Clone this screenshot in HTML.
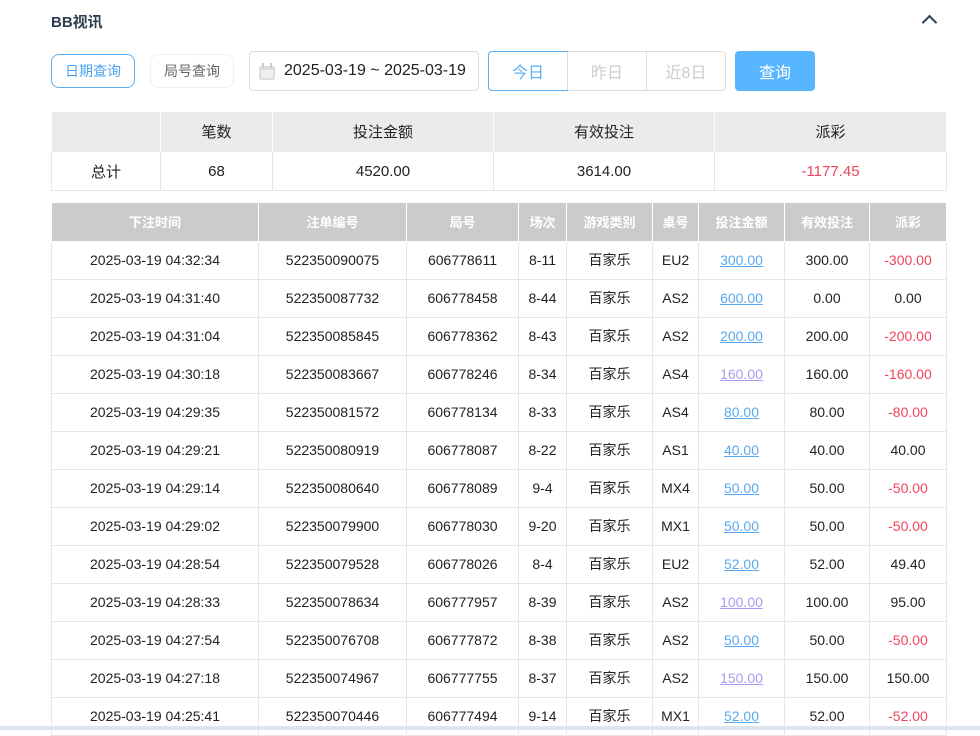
<!DOCTYPE html><html><head><meta charset="utf-8"><style>
*{margin:0;padding:0;box-sizing:border-box}
body{width:980px;height:730px;overflow:hidden;background:#fff;font-family:"Liberation Sans","Noto Sans CJK SC",sans-serif;color:#222;position:relative}
.t{position:absolute;left:51px;top:11px;font-size:15px;font-weight:bold;color:#2c3e50}
.car{position:absolute;left:924px;width:11px;height:11px;border-left:2.5px solid #2c3e50;border-top:2.5px solid #2c3e50;transform:rotate(45deg);top:17px}
.b{position:absolute;top:54px;height:34px;border-radius:8px;font-size:14px;display:flex;align-items:center;justify-content:center}
.date{position:absolute;left:249px;top:51px;width:230px;height:40px;border:1px solid #ddd;border-radius:4px;font-size:16px;display:flex;align-items:center;padding-left:34px}
.grp{position:absolute;left:488px;top:51px;width:238px;height:40px;border:1px solid #ddd;border-radius:4px;display:flex;font-size:16px;color:#ccc}
.grp div{flex:1;display:flex;align-items:center;justify-content:center;border-left:1px solid #ddd}
table{position:absolute;border-collapse:collapse;font-size:15px;text-align:center}
td,th{border:1px solid #e6e6e6}
.s{left:51px;top:111px;width:896px}
.s th{background:#ebebeb;font-weight:normal;height:40px;border-color:#fff #fff #ebebeb}
.s td{height:39px}
.m{left:51px;top:203px;width:896px;font-size:14px}
.m th{background:#cbcbcb;color:#fff;height:38px;border:1px solid #fff;border-top:0;font-weight:bold;font-size:13px}
.m td{height:38px}
.r{color:#f0445a}a{color:#5aa9f0;text-decoration:underline}.v{color:#a89ef0}
</style></head><body>
<div class="t">BB视讯</div><div class="car"></div>
<div class="b" style="left:51px;width:84px;border:1px solid #5ab0f5;color:#4aa3f0">日期查询</div>
<div class="b" style="left:150px;width:84px;border:1px solid #eee;color:#666">局号查询</div>
<div class="date"><svg style="position:absolute;left:9px;top:11px" width="16" height="17"><rect x="0" y="3" width="16" height="14" rx="2" fill="#ddd"/><rect x="3" y="0" width="2" height="5" fill="#ccc"/><rect x="11" y="0" width="2" height="5" fill="#ccc"/><rect x="2" y="7" width="12" height="8" fill="#eee"/></svg>2025-03-19 ~ 2025-03-19</div>
<div class="grp"><div style="border:1px solid #5ab0f5;color:#5ab0f5;margin:-1px;border-radius:4px 0 0 4px">今日</div><div>昨日</div><div>近8日</div></div>
<div class="b" style="left:735px;top:51px;height:40px;width:80px;border-radius:4px;background:#57b6fd;color:#fff;font-size:16px">查询</div>
<table class="s"><tr><th style="width:109px"></th><th style="width:112px">笔数</th><th style="width:221px">投注金额</th><th style="width:221px">有效投注</th><th>派彩</th></tr>
<tr><td>总计</td><td>68</td><td>4520.00</td><td>3614.00</td><td class="r">-1177.45</td></tr></table>
<table class="m"><tr><th style="width:207px">下注时间</th><th style="width:148px">注单编号</th><th style="width:112px">局号</th><th style="width:48px">场次</th><th style="width:86px">游戏类别</th><th style="width:46px">桌号</th><th style="width:86px">投注金额</th><th style="width:85px">有效投注</th><th>派彩</th></tr>
<tr><td>2025-03-19 04:32:34</td><td>522350090075</td><td>606778611</td><td>8-11</td><td>百家乐</td><td>EU2</td><td><a>300.00</a></td><td>300.00</td><td class="r">-300.00</td></tr>
<tr><td>2025-03-19 04:31:40</td><td>522350087732</td><td>606778458</td><td>8-44</td><td>百家乐</td><td>AS2</td><td><a>600.00</a></td><td>0.00</td><td>0.00</td></tr>
<tr><td>2025-03-19 04:31:04</td><td>522350085845</td><td>606778362</td><td>8-43</td><td>百家乐</td><td>AS2</td><td><a>200.00</a></td><td>200.00</td><td class="r">-200.00</td></tr>
<tr><td>2025-03-19 04:30:18</td><td>522350083667</td><td>606778246</td><td>8-34</td><td>百家乐</td><td>AS4</td><td><a class="v">160.00</a></td><td>160.00</td><td class="r">-160.00</td></tr>
<tr><td>2025-03-19 04:29:35</td><td>522350081572</td><td>606778134</td><td>8-33</td><td>百家乐</td><td>AS4</td><td><a>80.00</a></td><td>80.00</td><td class="r">-80.00</td></tr>
<tr><td>2025-03-19 04:29:21</td><td>522350080919</td><td>606778087</td><td>8-22</td><td>百家乐</td><td>AS1</td><td><a>40.00</a></td><td>40.00</td><td>40.00</td></tr>
<tr><td>2025-03-19 04:29:14</td><td>522350080640</td><td>606778089</td><td>9-4</td><td>百家乐</td><td>MX4</td><td><a>50.00</a></td><td>50.00</td><td class="r">-50.00</td></tr>
<tr><td>2025-03-19 04:29:02</td><td>522350079900</td><td>606778030</td><td>9-20</td><td>百家乐</td><td>MX1</td><td><a>50.00</a></td><td>50.00</td><td class="r">-50.00</td></tr>
<tr><td>2025-03-19 04:28:54</td><td>522350079528</td><td>606778026</td><td>8-4</td><td>百家乐</td><td>EU2</td><td><a>52.00</a></td><td>52.00</td><td>49.40</td></tr>
<tr><td>2025-03-19 04:28:33</td><td>522350078634</td><td>606777957</td><td>8-39</td><td>百家乐</td><td>AS2</td><td><a class="v">100.00</a></td><td>100.00</td><td>95.00</td></tr>
<tr><td>2025-03-19 04:27:54</td><td>522350076708</td><td>606777872</td><td>8-38</td><td>百家乐</td><td>AS2</td><td><a>50.00</a></td><td>50.00</td><td class="r">-50.00</td></tr>
<tr><td>2025-03-19 04:27:18</td><td>522350074967</td><td>606777755</td><td>8-37</td><td>百家乐</td><td>AS2</td><td><a class="v">150.00</a></td><td>150.00</td><td>150.00</td></tr>
<tr><td>2025-03-19 04:25:41</td><td>522350070446</td><td>606777494</td><td>9-14</td><td>百家乐</td><td>MX1</td><td><a>52.00</a></td><td>52.00</td><td class="r">-52.00</td></tr>
</table>
<div style="position:absolute;left:0;top:726px;width:980px;height:4px;background:#dde6ee"></div>
</body></html>
